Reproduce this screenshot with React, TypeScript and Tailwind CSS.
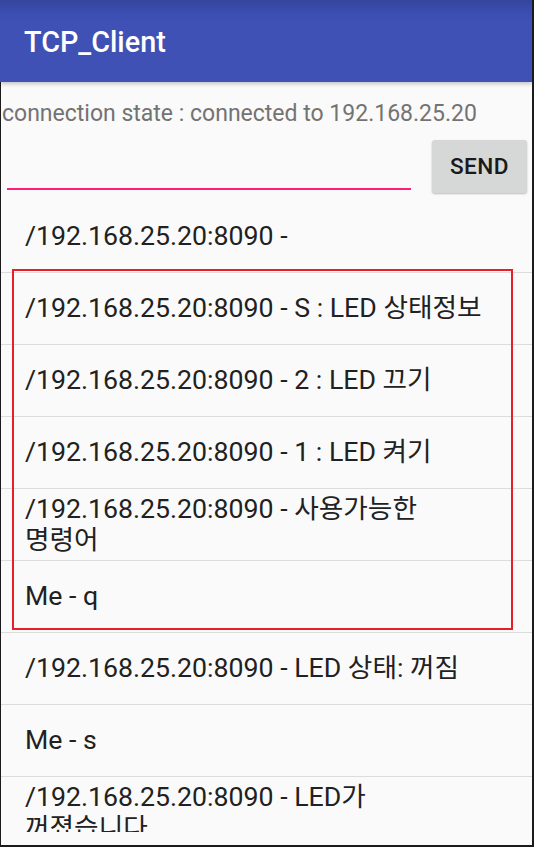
import React from 'react';

const messages: string[] = [
  '/192.168.25.20:8090 -',
  '/192.168.25.20:8090 - S : LED 상태정보',
  '/192.168.25.20:8090 - 2 : LED 끄기',
  '/192.168.25.20:8090 - 1 : LED 켜기',
  '/192.168.25.20:8090 - 사용가능한 명령어',
  'Me - q',
  '/192.168.25.20:8090 - LED 상태: 꺼짐',
  'Me - s',
  '/192.168.25.20:8090 - LED가 꺼졌습니다',
];

const App: React.FC = () => {
  return (
    <div className="relative w-[534px] h-[847px] overflow-hidden bg-[#1b1b1b] font-['Roboto','Noto_Sans_CJK_KR',sans-serif]">
      <div className="w-[532px] h-[845px] flex flex-col bg-[#fafafa] overflow-hidden">
        {/* App bar */}
        <div className="relative z-10 h-[82px] shrink-0 flex items-center pl-[24px] bg-[linear-gradient(to_bottom,#34459e_0px,#3b4db0_12px,#3f51b5_22px,#3f51b5_100%)] shadow-[0_2px_4px_rgba(0,0,0,0.22)]">
          <span className="text-white text-[28.8px] font-medium leading-none pt-[2px]">TCP_Client</span>
        </div>

        {/* Body */}
        <div className="flex-1 flex flex-col border-l border-[#1b1b1b] overflow-hidden">
          <p className="mt-[18px] pl-[1px] text-[23px] leading-[28px] text-[#737373] whitespace-nowrap">
            connection state : connected to 192.168.25.20
          </p>

          <div className="mt-[12px] flex items-start">
            <div className="ml-[6px] w-[404px] h-[50px] border-b-2 border-[#ff1f78]" />
            <button className="ml-auto mr-[5px] w-[95px] h-[53px] rounded-[3px] bg-[#d6d7d7] shadow-[0_1px_2px_rgba(0,0,0,0.25)] text-[22.6px] font-medium text-[#1a1a1a] tracking-[0.5px]">
              SEND
            </button>
          </div>

          {/* message list, clipped where the list view ends */}
          <ul className="mt-[8px] h-[631px] overflow-hidden">
            {messages.map((m, i) => (
              <li
                key={i}
                className="h-[72px] flex items-center pl-[24px] border-b border-[#dcdcdc]"
              >
                <span className="max-w-[463px] break-keep text-[26.7px] leading-[31px] text-[#212121]">{m}</span>
              </li>
            ))}
          </ul>
        </div>
      </div>

      {/* annotation box */}
      <div className="absolute left-[12px] top-[269px] w-[501px] h-[361px] border-2 border-[#e5202a]" />
    </div>
  );
};

export default App;
